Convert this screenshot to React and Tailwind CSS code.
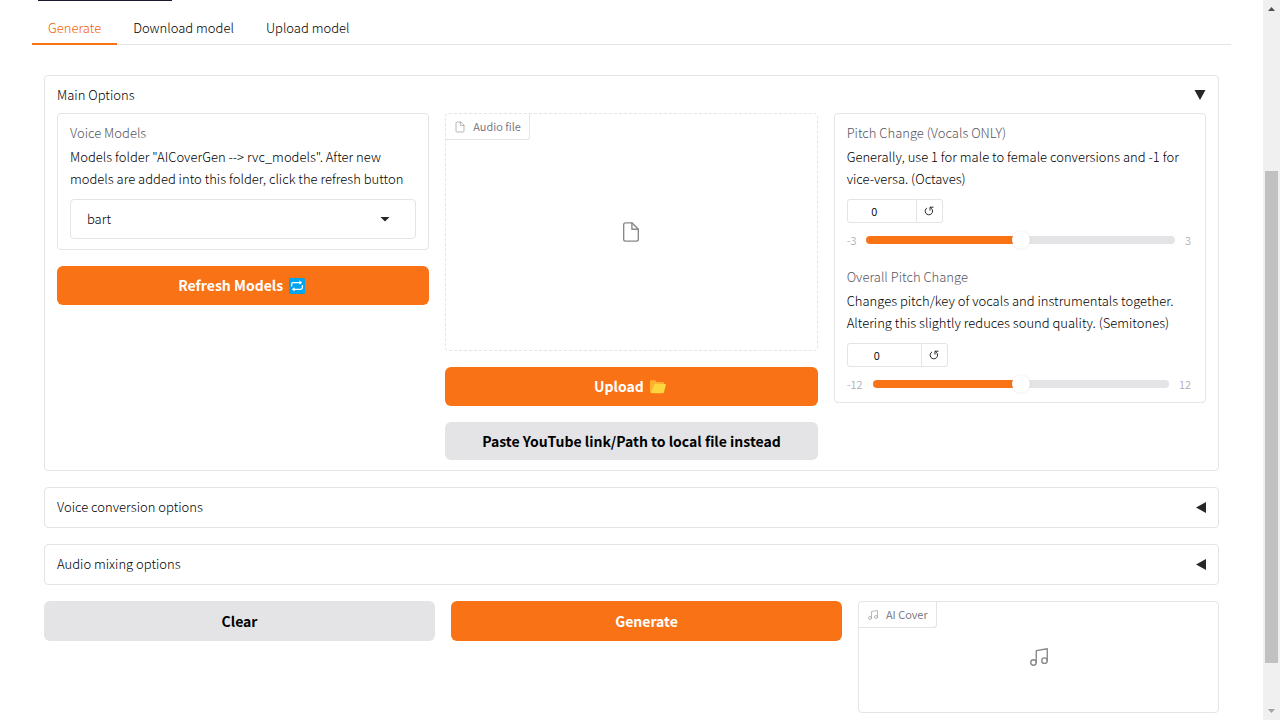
import { useState } from "react";

function FileIcon({ className }) {
  return (
    <svg viewBox="0 0 24 24" fill="none" stroke="currentColor" strokeWidth="1.5" strokeLinecap="round" strokeLinejoin="round" className={className} aria-hidden="true">
      <path d="M13 2H6a2 2 0 0 0-2 2v16a2 2 0 0 0 2 2h12a2 2 0 0 0 2-2V9z" />
      <polyline points="13 2 13 9 20 9" />
    </svg>
  );
}

function MusicIcon({ className }) {
  return (
    <svg viewBox="0 0 24 24" fill="none" stroke="currentColor" strokeWidth="1.5" strokeLinecap="round" strokeLinejoin="round" className={className} aria-hidden="true">
      <path d="M9 18V5l12-2v13" />
      <circle cx="6" cy="18" r="3" />
      <circle cx="18" cy="16" r="3" />
    </svg>
  );
}

function RepeatEmoji() {
  return (
    <svg viewBox="0 0 16 16" className="mr-[3px] size-4" aria-hidden="true">
      <rect width="16" height="16" rx="1.5" fill="#00a6ed" />
      <g fill="none" stroke="#fff" strokeWidth="1.3">
        <path d="M2.6 8.6V6.4Q2.600 4.700 4.300 4.700H11" />
        <path d="M13.4 7.200V9.600Q13.400 11.300 11.700 11.300H5" />
      </g>
      <path d="M10.400 2.600 13.200 4.700 10.400 6.800zM5.600 9.200 2.800 11.300 5.600 13.400z" fill="#fff" />
    </svg>
  );
}

function FolderEmoji() {
  return (
    <svg viewBox="0 0 16 16" className="mr-[3px] size-4" aria-hidden="true">
      <path d="M0 2.2Q0 1.2 1 1.2H5.2L6.8 2.9H13Q14 2.9 14 3.9V14H1.4Q0 14 0 12.6z" fill="#ffb02e" />
      <path d="M4.2 5.6Q4.5 4.9 5.2 4.9H15.2Q16.2 4.9 15.9 5.9L13.9 13.2Q13.6 14.2 12.6 14.2H1.6Q.9 14.2 1.2 13.4z" fill="#fcd53f" />
    </svg>
  );
}

function ResetIcon() {
  return (
    <svg viewBox="0 0 10 10" className="size-[10px]" fill="none" stroke="#27272a" aria-hidden="true">
      <path d="M3 1.900A3.700 3.700 0 1 0 7.300 2.300L6.300 1.300" strokeWidth="1" />
      <path d="M6 4.500V1.200H9.500" strokeWidth="1" />
    </svg>
  );
}

function Accordion({ title, open, onToggle, children }) {
  return (
    <section className="rounded-[4px] border border-[#e4e4e7] px-3 pt-[9px] pb-[10px]">
      <button type="button" aria-expanded={open} onClick={onToggle} className="flex w-full items-center justify-between text-left leading-5">
        <span>{title}</span>
        {open ? (
          <svg viewBox="0 0 12 12" className="size-3" aria-hidden="true"><path d="M.5 1H11.5L6 11z" fill="#27272a" /></svg>
        ) : (
          <svg viewBox="0 0 12 12" className="size-3" aria-hidden="true"><path d="M12 1V12L2 6.5z" fill="#27272a" /></svg>
        )}
      </button>
      {open && children}
    </section>
  );
}

function PitchSlider({ id, label, info, min, max, numberWidth }) {
  const [value, setValue] = useState(0);
  const percent = ((value - min) / (max - min)) * 100;
  return (
    <div>
      <label htmlFor={id} className="block leading-5 text-[#55555e]">{label}</label>
      <p className="mt-[3px] leading-[22px]">{info}</p>
      <div className="mt-[9px] flex h-6">
        <input
          type="number"
          aria-label={label + " value"}
          value={value}
          min={min}
          max={max}
          onChange={(e) => setValue(Number(e.target.value))}
          className={"rounded-l-[3px] border border-[#e4e4e7] pr-[15px] text-center text-[11px] font-[350] outline-none [appearance:textfield] [&::-webkit-inner-spin-button]:appearance-none " + numberWidth}
        />
        <button type="button" aria-label={"Reset " + label} onClick={() => setValue(0)} className="flex w-[26px] items-center justify-center rounded-r-[3px] border border-l-0 border-[#e4e4e7]">
          <ResetIcon />
        </button>
      </div>
      <div className="mt-2 flex h-[18px] items-center gap-[10px] pr-[2px] text-[11px] font-[350] text-[#b0b0b8]">
        <span>{min}</span>
        <input
          id={id}
          type="range"
          min={min}
          max={max}
          value={value}
          onChange={(e) => setValue(Number(e.target.value))}
          style={{ backgroundImage: `linear-gradient(to right, #f97316 ${percent}%, #e4e4e7 ${percent}%)` }}
          className="h-2 min-w-0 flex-1 appearance-none rounded-full [&::-webkit-slider-thumb]:size-[18px] [&::-webkit-slider-thumb]:appearance-none [&::-webkit-slider-thumb]:rounded-full [&::-webkit-slider-thumb]:bg-white [&::-webkit-slider-thumb]:shadow-[0_0_2px_rgba(0,0,0,0.15)]"
        />
        <span>{max}</span>
      </div>
    </div>
  );
}

function BlockLabel({ icon, children }) {
  return (
    <div className="flex h-[26px] w-fit items-center gap-[7px] rounded-br-[3px] border-r border-b border-[#e4e4e7] px-2 text-[11px] font-[350] text-[#71717a]">
      <span className="text-[#a1a1aa]">{icon}</span>
      <span>{children}</span>
    </div>
  );
}

function ScrollBar() {
  return (
    <div className="flex w-[17px] shrink-0 flex-col items-center bg-[#f0f0f0]" aria-hidden="true">
      <svg viewBox="0 0 17 17" className="size-[17px]"><path d="M5 11H12L8.500 7z" fill="#505050" /></svg>
      <div className="flex w-full flex-1 flex-col items-center">
        <div className="grow-[154]" />
        <div className="w-[13px] grow-[492] bg-[#c1c1c1]" />
        <div className="grow-[40]" />
      </div>
      <svg viewBox="0 0 17 17" className="size-[17px]"><path d="M5 6H12L8.500 10z" fill="#a3a3a3" /></svg>
    </div>
  );
}

const tabs = ["Generate", "Download model", "Upload model"];

export default function App() {
  const [tab, setTab] = useState("Generate");
  const [open, setOpen] = useState({ main: true, voice: false, mixing: false });
  const toggle = (key) => setOpen({ ...open, [key]: !open[key] });

  return (
    <div className="flex h-screen bg-white font-['Noto_Sans_CJK_SC',sans-serif] text-[13px] font-light text-black">
      <main className="min-w-0 flex-1 overflow-y-auto px-8 [scrollbar-width:none]">
        <div className="ml-[6px] h-px w-[134px] bg-[#1a1a2e]" />
        <div role="tablist" className="mt-4 flex border-b border-[#e4e4e7]">
          {tabs.map((name) => (
            <button
              key={name}
              type="button"
              role="tab"
              aria-selected={tab === name}
              onClick={() => setTab(name)}
              className={"-mb-px border-b-2 px-4 pb-[4px] leading-[22px] " + (tab === name ? "border-[#f97316] text-[#f55f00]" : "border-transparent")}
            >
              {name}
            </button>
          ))}
        </div>

        <div className="flex flex-col gap-4 px-3 pt-[30px] pb-[6px]">
          <Accordion title="Main Options" open={open.main} onToggle={() => toggle("main")}>
            <div className="mt-2 grid grid-cols-3 items-start gap-4">
              <div className="flex flex-col gap-4">
                <div className="rounded-[4px] border border-[#e4e4e7] px-3 pt-[9px] pb-[10px]">
                  <label htmlFor="voice-model" className="block leading-5 text-[#55555e]">Voice Models</label>
                  <p className="mt-[3px] leading-[22px]">
                    Models folder "AICoverGen --&gt; rvc_models". After new models are added into this folder, click the refresh button
                  </p>
                  <div className="relative mt-[9px]">
                    <select id="voice-model" className="block h-10 w-full appearance-none rounded-[4px] border border-[#e4e4e7] bg-white px-4 outline-none">
                      <option>bart</option>
                    </select>
                    <svg viewBox="0 0 10 5" className="pointer-events-none absolute top-[18px] right-[26px] h-[5px] w-[10px]" aria-hidden="true"><path d="M0.500 0H9.500L5 4.500z" fill="#27272a" /></svg>
                  </div>
                </div>
                <button type="button" className="flex h-[39px] items-center justify-center gap-[6px] rounded-[6px] bg-[#f97316] text-[14px] font-bold text-white">
                  Refresh Models <RepeatEmoji />
                </button>
              </div>

              <div className="flex flex-col gap-4">
                <div className="relative h-[238px] rounded-[4px] border border-dashed border-[#e4e4e7]">
                  <BlockLabel icon={<FileIcon className="size-3" />}>Audio file</BlockLabel>
                  <div className="absolute inset-0 flex items-center justify-center text-[#888]">
                    <FileIcon className="size-[22px]" />
                  </div>
                </div>
                <button type="button" className="flex h-[39px] items-center justify-center gap-[6px] rounded-[6px] bg-[#f97316] text-[14px] font-bold text-white">
                  Upload <FolderEmoji />
                </button>
                <button type="button" className="h-[38px] rounded-[6px] bg-[#e4e4e7] text-[14px] font-bold text-black">
                  Paste YouTube link/Path to local file instead
                </button>
              </div>

              <div className="flex flex-col gap-[18px] rounded-[4px] border border-[#e4e4e7] px-3 pt-[9px] pb-[9px]">
                <PitchSlider id="pitch" label="Pitch Change (Vocals ONLY)" info="Generally, use 1 for male to female conversions and -1 for vice-versa. (Octaves)" min={-3} max={3} numberWidth="w-[70px]" />
                <PitchSlider id="overall-pitch" label="Overall Pitch Change" info="Changes pitch/key of vocals and instrumentals together. Altering this slightly reduces sound quality. (Semitones)" min={-12} max={12} numberWidth="w-[75px]" />
              </div>
            </div>
          </Accordion>

          <Accordion title="Voice conversion options" open={open.voice} onToggle={() => toggle("voice")} />
          <Accordion title="Audio mixing options" open={open.mixing} onToggle={() => toggle("mixing")} />

          <div className="grid grid-cols-[391fr_391fr_361fr] items-start gap-4">
            <button type="button" className="h-10 rounded-[6px] bg-[#e4e4e7] text-[14px] font-bold text-black">Clear</button>
            <button type="button" className="h-10 rounded-[6px] bg-[#f97316] text-[14px] font-bold text-white">Generate</button>
            <div className="relative h-28 rounded-[4px] border border-[#e4e4e7]">
              <BlockLabel icon={<MusicIcon className="size-3" />}>AI Cover</BlockLabel>
              <div className="absolute inset-0 flex items-center justify-center text-[#888]">
                <MusicIcon className="size-[22px]" />
              </div>
            </div>
          </div>
        </div>
      </main>
      <ScrollBar />
    </div>
  );
}
